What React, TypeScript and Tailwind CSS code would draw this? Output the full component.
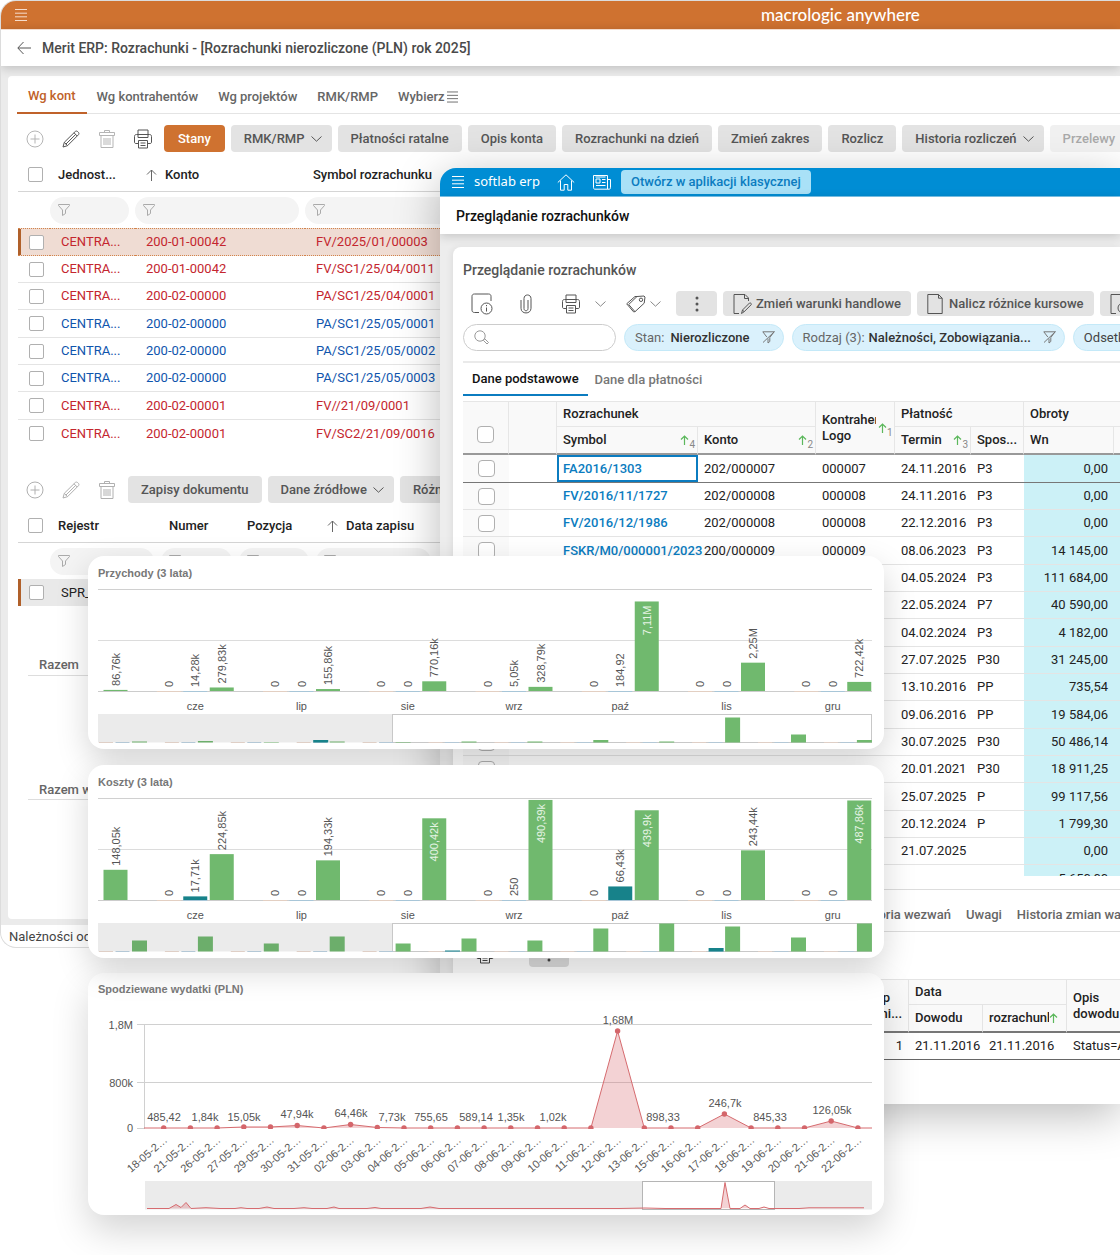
import type { ReactNode } from 'react';

type IconProps = { className?: string };

/* ---------- icons ---------- */

const Svg = ({ w, h, className = '', children }: { w: number; h: number; className?: string; children: ReactNode }) => (
  <svg width={w} height={h} viewBox={`0 0 ${w} ${h}`} fill="none" stroke="currentColor" strokeWidth="1" className={`shrink-0 ${className}`} aria-hidden="true">
    {children}
  </svg>
);

const MenuIcon = ({ className }: IconProps) => (
  <Svg w={12} h={12} className={className}>
    <path d="M0 .5h12M0 4.2h12M0 7.8h12M0 11.5h12" />
  </Svg>
);

const BackIcon = () => (
  <Svg w={14} h={14}>
    <path d="M14 7H1M6.500 1 .8 7l5.700 6" />
  </Svg>
);

const PlusIcon = ({ className }: IconProps) => (
  <Svg w={18} h={18} className={className}>
    <circle cx="9" cy="9" r="8" />
    <path d="M9 4.500v9M4.500 9h9" />
  </Svg>
);

const PencilIcon = ({ className }: IconProps) => (
  <Svg w={18} h={18} className={className}>
    <path d="M1 17l1.300-4.700L13.200 1.600c.7-.7 1.700-.7 2.500 0l.7.7c.7.800.7 1.800 0 2.500L5.500 15.700 1 17zM12 2.800l3.200 3.200M3.800 14.200 13.800 4.300M2.300 12.300l3.200 3.300" />
  </Svg>
);

const TrashIcon = ({ className }: IconProps) => (
  <Svg w={16} h={18} className={className}>
    <path d="M.5 2.500h15v3H.5zM5.500 2.500V.5h5v2M2 5.500v12h12v-12M5 8v7M7 8v7M9 8v7M11 8v7" />
  </Svg>
);

const PrinterIcon = ({ className }: IconProps) => (
  <Svg w={20} h={20} className={className}>
    <path d="M5 5.500V1h10v4.500M5 14.500H3c-1 0-1.500-.5-1.500-1.500V7.500c0-1.300.7-2 2-2h13c1.300 0 2 .7 2 2V13c0 1-.5 1.500-1.500 1.500h-2M5 8.500h10v-3M5 8.500v-3M5.500 11.500h9V19h-9zM7.500 14h5M7.500 16.500h5" />
  </Svg>
);

const ChevronIcon = ({ className }: IconProps) => (
  <Svg w={11} h={6} className={className}>
    <path d="M.5.500 5.500 5.200 10.500.5" />
  </Svg>
);

const UpIcon = ({ className }: IconProps) => (
  <Svg w={11} h={12} className={className}>
    <path d="M5.500 12V1M1 5.500 5.500 1 10 5.500" />
  </Svg>
);

const FunnelIcon = ({ className }: IconProps) => (
  <Svg w={12} h={12} className={className}>
    <path d="M.5.5h11v1L7.500 6v3.500l-3 2V6L.5 1.500z" />
  </Svg>
);

const FunnelOffIcon = () => (
  <Svg w={13} h={13}>
    <path d="M.8.800h11.400L7.800 6.500v4L6 12V7.500M.8.800l4 5.200M12.500.500 1 11.500" />
  </Svg>
);

const HomeIcon = () => (
  <Svg w={18} h={17}>
    <path d="M.8 8.500 9 .8l8.200 7.700M3.500 6.500v9.700h3.700v-5.700h3.600v5.700h3.700V6.500" />
  </Svg>
);

const NewsIcon = () => (
  <Svg w={18} h={15}>
    <path d="M.5.500h14v13.700H2c-1 0-1.500-.7-1.500-1.500zM14.500 4.500h3v8.200c0 1-.5 1.500-1.500 1.500h-1.500M3 4h4v4H3zM9 4.500h3.500M9 7.500h3.500M3 10.500h9.500M2.500 2h10" />
  </Svg>
);

const WindowInfoIcon = () => (
  <Svg w={22} h={22}>
    <path d="M8 19.500H3.500c-1.500 0-2.500-.8-2.500-2.300V3.300C1 1.800 2 1 3.500 1h14C19 1 20 1.800 20 3.300V8" />
    <circle cx="15.500" cy="15.500" r="5.500" />
    <path d="M15.500 14.500v4M15.500 12v1.200" />
  </Svg>
);

const ClipIcon = () => (
  <Svg w={12} h={20}>
    <path d="M8 6v8.500c0 3-4 3-4 0V4.500c0-4.700 7-4.700 7 0v9.800c0 6.200-10 6.200-10 0V6" />
  </Svg>
);

const TagIcon = () => (
  <Svg w={20} h={18}>
    <path d="M11 1.500 18 1l1 1-.8 6.200L9 16.700 2.700 9.500zM11 1.500H9L.7 8.800l6.800 8 1.500-.1" />
    <circle cx="15" cy="4.800" r="1.700" />
  </Svg>
);

const DotsIcon = () => (
  <svg width="4" height="16" viewBox="0 0 4 16" fill="currentColor" aria-hidden="true">
    <circle cx="2" cy="2" r="1.500" />
    <circle cx="2" cy="8" r="1.500" />
    <circle cx="2" cy="14" r="1.500" />
  </svg>
);

const FileEditIcon = () => (
  <Svg w={19} h={20}>
    <path d="M6 19.500H1V.5h11l3.500 3.500v3M11.500.5v4h4M8.500 19.500l1-3.500 7-7c.8-.7 2.400.8 1.700 1.700l-7 7zM9.500 16l2 2" />
  </Svg>
);

const FileIcon = () => (
  <Svg w={16} h={20}>
    <path d="M.8.500h10.700l3.700 3.700v15.300H.8zM11.500.5v3.700h3.700" />
  </Svg>
);

const FileClockIcon = () => (
  <Svg w={19} h={20}>
    <path d="M6 19.500H1V.5h11l3.500 3.500v3M11.500.5v4h4" />
    <circle cx="13" cy="14" r="5" />
    <path d="M13 11v3h3" />
  </Svg>
);

const SearchIcon = () => (
  <Svg w={15} h={15} className="text-[#999]">
    <circle cx="6" cy="6" r="5.200" />
    <path d="M9.800 9.800l1-1 3.700 3.700-1.500 1.500-3.700-3.700z" />
  </Svg>
);

/* ---------- shared bits ---------- */

const Check = ({ label, className = '' }: { label: string; className?: string }) => (
  <input type="checkbox" aria-label={label} className={`block shrink-0 appearance-none border border-[#b0b0b0] bg-white ${className}`} />
);

const SmallCheck = ({ label }: { label: string }) => <Check label={label} className="h-[15px] w-[15px] rounded-[2px]" />;
const BigCheck = ({ label }: { label: string }) => <Check label={label} className="mx-auto h-[17px] w-[17px] rounded-[4px]" />;

const IconButton = ({ label, children, className = '' }: { label: string; children: ReactNode; className?: string }) => (
  <button type="button" aria-label={label} className={`flex shrink-0 items-center justify-center ${className}`}>
    {children}
  </button>
);

const GreyButton = ({ children, className = 'px-[13px]' }: { children: ReactNode; className?: string }) => (
  <button type="button" className={`flex h-[27px] shrink-0 items-center gap-1.5 rounded-[4px] bg-[#e3e3e3] font-medium whitespace-nowrap text-[#555] ${className}`}>
    {children}
  </button>
);

const FilterBox = ({ label }: { label: string }) => (
  <label className="flex h-[27px] items-center rounded-full bg-[#f4f4f4] px-2 text-[#aaa]">
    <FunnelIcon />
    <input type="text" aria-label={`Filtr ${label}`} className="w-0 min-w-0 flex-1 bg-transparent outline-none" />
  </label>
);

/* ---------- back window ---------- */

const accounts = [
  { konto: '200-01-00042', symbol: 'FV/2025/01/00003', tone: 'text-[#c4262e]' },
  { konto: '200-01-00042', symbol: 'FV/SC1/25/04/0011', tone: 'text-[#c4262e]' },
  { konto: '200-02-00000', symbol: 'PA/SC1/25/04/0001', tone: 'text-[#c4262e]' },
  { konto: '200-02-00000', symbol: 'PA/SC1/25/05/0001', tone: 'text-[#0f55ad]' },
  { konto: '200-02-00000', symbol: 'PA/SC1/25/05/0002', tone: 'text-[#0f55ad]' },
  { konto: '200-02-00000', symbol: 'PA/SC1/25/05/0003', tone: 'text-[#0f55ad]' },
  { konto: '200-02-00001', symbol: 'FV//21/09/0001', tone: 'text-[#c4262e]' },
  { konto: '200-02-00001', symbol: 'FV/SC2/21/09/0016', tone: 'text-[#c4262e]' },
];

function AccountsTable() {
  return (
    <table className="mt-1.5 ml-2.5 w-full table-fixed border-separate border-spacing-0 text-left">
      <colgroup>
        <col className="w-8" />
        <col className="w-[85px]" />
        <col className="w-[170px]" />
        <col />
      </colgroup>
      <thead>
        <tr className="h-[34px] text-[#222] [&>th]:border-b [&>th]:border-[#d5d5d5] [&>th]:font-medium">
          <th className="pl-2.5"><SmallCheck label="Zaznacz wszystkie" /></th>
          <th className="pl-2">Jednost...</th>
          <th className="pl-[11px]">
            <span className="flex items-center gap-2"><UpIcon className="text-[#666]" />Konto</span>
          </th>
          <th className="pl-2">Symbol rozrachunku</th>
        </tr>
        <tr className="h-9">
          <td />
          <td className="pr-1.5"><FilterBox label="jednostka" /></td>
          <td className="pr-1.5"><FilterBox label="konto" /></td>
          <td className="pr-1.5"><FilterBox label="symbol" /></td>
        </tr>
      </thead>
      <tbody>
        {accounts.map((a, i) => (
          <tr
            key={a.symbol}
            className={`h-[27px] nth-[3n+1]:h-[28px] [&>td]:pl-[11px] ${a.tone} ${
              i === 0
                ? 'bg-[#efdcd3] [&>td]:border-y [&>td]:border-dotted [&>td]:border-[#d2844c]'
                : i < accounts.length - 1 ? '[&>td]:border-b [&>td]:border-[#e4e4e4]' : ''
            }`}
          >
            <td className={i === 0 ? 'shadow-[inset_3px_0_0_#b0602a]' : ''}>
              <SmallCheck label={a.symbol} />
            </td>
            <td>CENTRA...</td>
            <td>{a.konto}</td>
            <td>{a.symbol}</td>
          </tr>
        ))}
      </tbody>
    </table>
  );
}

function EntriesTable() {
  return (
    <table className="mt-1.5 ml-2.5 w-full table-fixed border-separate border-spacing-0 text-left">
      <colgroup>
        <col className="w-8" />
        <col className="w-[111px]" />
        <col className="w-[78px]" />
        <col className="w-[77px]" />
        <col className="w-[122px]" />
        <col />
      </colgroup>
      <thead>
        <tr className="h-[34px] text-[#222] [&>th]:border-b [&>th]:border-[#d5d5d5] [&>th]:font-medium">
          <th className="pl-2.5"><SmallCheck label="Zaznacz wszystkie zapisy" /></th>
          <th className="pl-2">Rejestr</th>
          <th className="pl-2">Numer</th>
          <th className="pl-2">Pozycja</th>
          <th className="pl-[11px]">
            <span className="flex items-center gap-2"><UpIcon className="text-[#666]" />Data zapisu</span>
          </th>
          <th />
        </tr>
        <tr className="h-9 [&>td]:pr-[7px]">
          <td />
          <td><FilterBox label="rejestr" /></td>
          <td><FilterBox label="numer" /></td>
          <td><FilterBox label="pozycja" /></td>
          <td><FilterBox label="data zapisu" /></td>
          <td />
        </tr>
      </thead>
      <tbody>
        <tr className="h-[27px] bg-[#e9e9e9] text-[#222]">
          <td className="pl-[11px] shadow-[inset_3px_0_0_#b0602a]"><SmallCheck label="SPR" /></td>
          <td className="pl-[11px]">SPR_</td>
          <td colSpan={4} />
        </tr>
      </tbody>
    </table>
  );
}

function MeritWindow() {
  return (
    <section className="col-start-1 row-start-1 self-start overflow-hidden rounded-l-2xl border border-r-0 border-[#dcdcdc] bg-[#ebebeb]">
      <header className="flex h-7 items-center bg-[#cf7230] text-white">
        <button type="button" aria-label="Menu" className="ml-3.5"><MenuIcon className="text-[#f6dccb]" /></button>
        <span className="ml-[734px] font-['Lato'] text-[17px] font-medium whitespace-nowrap">macrologic anywhere</span>
      </header>
      <div className="relative flex h-[37px] items-center gap-[11px] border-t border-[#f3dccd] bg-white pl-4 text-[#555] shadow-[0_2px_10px_rgba(0,0,0,0.2)]">
        <button type="button" aria-label="Wstecz"><BackIcon /></button>
        <h1 className="text-sm font-medium whitespace-nowrap text-[#4a4a4a]">Merit ERP: Rozrachunki - [Rozrachunki nierozliczone (PLN) rok 2025]</h1>
      </div>

      <div className="mt-2.5 ml-[7px] overflow-hidden rounded-l-[4px] bg-white pb-[119px]">
        <nav className="ml-[9px] flex h-[38px] border-b border-[#e4e4e4] font-medium text-[#666]">
          <button type="button" className="-mb-px border-b-2 border-[#c0622a] px-[11px] pt-1 text-[#c0622a]">Wg kont</button>
          <button type="button" className="px-2.5 pt-1">Wg kontrahentów</button>
          <button type="button" className="px-2.5 pt-1">Wg projektów</button>
          <button type="button" className="px-2.5 pt-1">RMK/RMP</button>
          <button type="button" className="flex items-center gap-0.5 px-2.5 pt-1">Wybierz<MenuIcon className="w-[11px]" /></button>
        </nav>

        <div className="mt-[11px] ml-2.5 flex items-center gap-1.5">
          <div className="flex w-[140px] items-center">
            <IconButton label="Dodaj" className="-ml-px w-9"><PlusIcon className="text-[#b5b5b5]" /></IconButton>
            <IconButton label="Edytuj" className="w-9"><PencilIcon className="text-[#555]" /></IconButton>
            <IconButton label="Usuń" className="w-9"><TrashIcon className="text-[#b5b5b5]" /></IconButton>
            <IconButton label="Drukuj" className="w-9"><PrinterIcon className="text-[#555]" /></IconButton>
          </div>
          <button type="button" className="h-[27px] shrink-0 rounded-[4px] bg-[#cf7230] px-3.5 font-medium text-white">Stany</button>
          <GreyButton className="pr-2.5 pl-[13px]">RMK/RMP<ChevronIcon /></GreyButton>
          <GreyButton>Płatności ratalne</GreyButton>
          <GreyButton>Opis konta</GreyButton>
          <GreyButton>Rozrachunki na dzień</GreyButton>
          <GreyButton>Zmień zakres</GreyButton>
          <GreyButton>Rozlicz</GreyButton>
          <GreyButton className="pr-2.5 pl-[13px]">Historia rozliczeń<ChevronIcon /></GreyButton>
          <GreyButton className="px-[13px] opacity-50">Przelewy</GreyButton>
        </div>

        <AccountsTable />

        <div className="mt-[29px] ml-2.5 flex items-center gap-1.5">
          <div className="flex w-[104px] items-center text-[#b0b0b0]">
            <IconButton label="Dodaj zapis" className="-ml-px w-9"><PlusIcon /></IconButton>
            <IconButton label="Edytuj zapis" className="w-9"><PencilIcon /></IconButton>
            <IconButton label="Usuń zapis" className="w-9"><TrashIcon /></IconButton>
          </div>
          <GreyButton>Zapisy dokumentu</GreyButton>
          <GreyButton className="pr-2.5 pl-[13px]">Dane źródłowe<ChevronIcon /></GreyButton>
          <GreyButton>Różnice</GreyButton>
        </div>

        <EntriesTable />

        <div className="mt-[47px] ml-5 h-[23px] border-b border-[#ddd] pl-[11px] leading-6 font-medium text-[#666]">Razem</div>
        <div className="mt-[102px] ml-5 h-[22px] border-b border-[#ddd] pl-[11px] leading-6 font-medium text-[#666]">Razem w</div>
      </div>

      <footer className="mt-1.5 h-[22px] bg-white pl-2 leading-6 text-[#444]">Należności od</footer>
    </section>
  );
}

/* ---------- front window ---------- */

const settlements = [
  { symbol: 'FA2016/1303', konto: '202/000007', logo: '000007', termin: '24.11.2016', sposob: 'P3', wn: '0,00' },
  { symbol: 'FV/2016/11/1727', konto: '202/000008', logo: '000008', termin: '24.11.2016', sposob: 'P3', wn: '0,00' },
  { symbol: 'FV/2016/12/1986', konto: '202/000008', logo: '000008', termin: '22.12.2016', sposob: 'P3', wn: '0,00' },
  { symbol: 'FSKR/M0/000001/2023', konto: '200/000009', logo: '000009', termin: '08.06.2023', sposob: 'P3', wn: '14 145,00' },
  { termin: '04.05.2024', sposob: 'P3', wn: '111 684,00' },
  { termin: '22.05.2024', sposob: 'P7', wn: '40 590,00' },
  { termin: '04.02.2024', sposob: 'P3', wn: '4 182,00' },
  { termin: '27.07.2025', sposob: 'P30', wn: '31 245,00' },
  { termin: '13.10.2016', sposob: 'PP', wn: '735,54' },
  { termin: '09.06.2016', sposob: 'PP', wn: '19 584,06' },
  { termin: '30.07.2025', sposob: 'P30', wn: '50 486,14' },
  { termin: '20.01.2021', sposob: 'P30', wn: '18 911,25' },
  { termin: '25.07.2025', sposob: 'P', wn: '99 117,56' },
  { termin: '20.12.2024', sposob: 'P', wn: '1 799,30' },
  { termin: '21.07.2025', sposob: '', wn: '0,00' },
  { termin: '', sposob: '', wn: '5 650,00' },
];

const SortMark = ({ n }: { n?: string }) => (
  <span className="flex shrink-0 items-center font-normal text-[#888]">
    <Svg w={9} h={10} className="text-[#5cb85c]"><path d="M4.500 10V1M1 4.500 4.500 1 8 4.500" strokeWidth="1.200" /></Svg>
    {n && <span className="pt-2.5 text-[10px] leading-none">{n}</span>}
  </span>
);

function SettlementsTable() {
  return (
    <div className="mt-[5px] ml-2.5 h-[475px] overflow-hidden">
      <table className="w-full table-fixed border-separate border-spacing-0 text-left text-[#222]">
        <colgroup>
          <col className="w-[46px]" />
          <col className="w-12" />
          <col className="w-[141px]" />
          <col className="w-[118px]" />
          <col className="w-[79px]" />
          <col className="w-[76px]" />
          <col className="w-[53px]" />
          <col className="w-[90px]" />
          <col />
        </colgroup>
        <thead className="bg-[#f9f9f9] [&_th]:border-r [&_th]:border-[#e6e6e6] [&_th]:pl-1.5 [&_th]:font-medium [&_th]:whitespace-nowrap [&_th:last-child]:border-r-0">
          <tr className="h-[26px] [&>th]:border-t">
            <th rowSpan={2} className="border-b-2 border-b-[#999]! pt-3.5 pl-0!"><BigCheck label="Zaznacz wszystkie rozrachunki" /></th>
            <th rowSpan={2} className="border-b-2 border-b-[#999]!" />
            <th colSpan={2} className="border-b">Rozrachunek</th>
            <th rowSpan={2} className="border-b-2 border-b-[#999]!">
              <div className="flex items-center gap-0.5">
                <div className="w-[54px] overflow-hidden leading-4">Kontrahent<br />Logo</div>
                <SortMark n="1" />
              </div>
            </th>
            <th colSpan={2} className="border-b">Płatność</th>
            <th colSpan={2} className="border-b">Obroty</th>
          </tr>
          <tr className="h-7 [&>th]:border-b-2 [&>th]:border-b-[#999]">
            <th className="pr-0.5"><div className="flex items-center justify-between">Symbol<SortMark n="4" /></div></th>
            <th className="pr-0.5"><div className="flex items-center justify-between">Konto<SortMark n="2" /></div></th>
            <th className="pr-0.5"><div className="flex items-center justify-between">Termin<SortMark n="3" /></div></th>
            <th>Spos...</th>
            <th>Wn</th>
            <th />
          </tr>
        </thead>
        <tbody>
          {settlements.map((s, i) => (
            <tr
              key={i}
              className={`h-[27px] nth-[3n+1]:h-[28px] [&>td]:border-b [&>td]:pl-1.5 ${i === 0 ? '[&>td]:border-[#777]' : '[&>td]:border-[#e4e4e4]'}`}
            >
              <td className="bg-[#fafafa] pl-0!"><BigCheck label={s.symbol ?? `Rozrachunek ${i + 1}`} /></td>
              <td />
              <td className={`font-medium whitespace-nowrap text-[#0b7cc0] ${i === 0 ? 'shadow-[inset_0_0_0_2px_#0b7cc0]' : ''}`}>
                {s.symbol && <a href="#rozrachunek">{s.symbol}</a>}
              </td>
              <td>{s.konto}</td>
              <td>{s.logo}</td>
              <td>{s.termin}</td>
              <td>{s.sposob}</td>
              <td className="bg-[#ccf1f7] pr-1.5 text-right">{s.wn}</td>
              <td className="bg-[#ccf1f7]" />
            </tr>
          ))}
        </tbody>
      </table>
    </div>
  );
}

function DocumentsTable() {
  return (
    <table className="mt-3 ml-2.5 w-full table-fixed border-separate border-spacing-0 text-left text-[#222]">
      <colgroup>
        <col className="w-[400px]" />
        <col className="w-[46px]" />
        <col className="w-[74px]" />
        <col className="w-[84px]" />
        <col />
      </colgroup>
      <thead className="bg-[#f9f9f9] [&_th]:border-r [&_th]:border-[#e4e4e4] [&_th]:pl-1.5 [&_th]:font-medium">
        <tr className="h-[26px] [&>th]:border-t">
          <th rowSpan={2} className="border-b-2 border-b-[#777]!" />
          <th rowSpan={2} className="border-b-2 border-b-[#777]! pr-1.5 text-right leading-4"><span className="pr-3">Lp</span><br />ni...</th>
          <th colSpan={2} className="border-b">Data</th>
          <th rowSpan={2} className="border-b-2 border-b-[#777]! leading-4">Opis<br />dowodu</th>
        </tr>
        <tr className="h-7 [&>th]:border-b-2 [&>th]:border-b-[#777]">
          <th>Dowodu</th>
          <th>
            <div className="flex items-center">
              <span className="w-[60px] overflow-hidden">rozrachunku</span>
              <SortMark />
            </div>
          </th>
        </tr>
      </thead>
      <tbody>
        <tr className="h-[27px] [&>td]:border-b [&>td]:border-[#666] [&>td]:pl-1.5">
          <td />
          <td className="pr-1.5 text-right">1</td>
          <td>21.11.2016</td>
          <td>21.11.2016</td>
          <td className="whitespace-nowrap">Status=A</td>
        </tr>
      </tbody>
    </table>
  );
}

function SoftlabWindow() {
  return (
    <section className="col-start-1 row-start-1 mt-[168px] ml-[440px] self-start overflow-hidden rounded-tl-2xl bg-[#ededed] shadow-[0_10px_45px_rgba(0,0,0,0.28)]">
      <header className="flex h-[29px] items-center border-b border-[#7cc6ec] bg-[#008dd4] text-white">
        <button type="button" aria-label="Menu" className="ml-3"><MenuIcon /></button>
        <span className="ml-2.5 w-[83px] font-['Noto_Sans'] text-[13px] whitespace-nowrap">softlab erp</span>
        <IconButton label="Start" className="w-[18px]"><HomeIcon /></IconButton>
        <IconButton label="Aktualności" className="ml-[18px] w-[18px]"><NewsIcon /></IconButton>
        <button type="button" className="ml-2.5 h-6 rounded-[4px] bg-[#a9e1f7] px-2.5 font-medium whitespace-nowrap text-[#0b7cc0]">Otwórz w aplikacji klasycznej</button>
      </header>
      <div className="relative flex h-[37px] items-center bg-white pl-4 shadow-[0_2px_10px_rgba(0,0,0,0.18)]">
        <h2 className="text-sm font-medium text-[#111]">Przeglądanie rozrachunków</h2>
      </div>

      <div className="mt-[13px] ml-[13px] rounded-tl-lg bg-white pb-11 shadow-[-2px_0_6px_rgba(0,0,0,0.06)]">
        <h3 className="flex h-11 items-center pt-0.5 pl-2.5 text-sm font-medium text-[#555]">Przeglądanie rozrachunków</h3>
        <div className="flex h-[25px] items-center overflow-hidden pl-[18px] text-[#555]">
          <IconButton label="Informacje"><WindowInfoIcon /></IconButton>
          <IconButton label="Załączniki" className="ml-[27px]"><ClipIcon /></IconButton>
          <IconButton label="Drukuj" className="ml-[29px]"><PrinterIcon /></IconButton>
          <IconButton label="Opcje wydruku" className="ml-3.5"><ChevronIcon className="text-[#888]" /></IconButton>
          <IconButton label="Etykiety" className="ml-5"><TagIcon /></IconButton>
          <IconButton label="Opcje etykiet" className="ml-1"><ChevronIcon className="text-[#888]" /></IconButton>
          <IconButton label="Więcej" className="ml-[15px] h-[25px] w-[41px] rounded-[4px] bg-[#e3e3e3]"><DotsIcon /></IconButton>
          <button type="button" className="ml-1.5 flex h-[25px] shrink-0 items-center gap-1 rounded-[4px] bg-[#e3e3e3] px-2.5 font-medium whitespace-nowrap"><FileEditIcon />Zmień warunki handlowe</button>
          <button type="button" className="ml-1.5 flex h-[25px] shrink-0 items-center gap-1.5 rounded-[4px] bg-[#e3e3e3] px-2.5 font-medium whitespace-nowrap"><FileIcon />Nalicz różnice kursowe</button>
          <button type="button" aria-label="Odsetki" className="ml-1.5 flex h-[25px] w-20 shrink-0 items-center rounded-[4px] bg-[#e3e3e3] pl-2.5"><FileClockIcon /></button>
        </div>

        <div className="mt-2 ml-2.5 flex gap-2 overflow-hidden whitespace-nowrap">
          <label className="flex h-[27px] w-[153px] shrink-0 items-center rounded-full border border-[#ccc] px-2.5">
            <SearchIcon />
            <input type="search" aria-label="Szukaj" className="w-0 min-w-0 flex-1 bg-transparent outline-none" />
          </label>
          <div className="flex h-[27px] shrink-0 items-center rounded-full border border-[#c4e9f8] bg-[#daf1fc] pr-2 pl-2.5 text-[#333]">
            <span className="text-[#666]">Stan:</span>
            <span className="ml-1.5 font-medium">Nierozliczone</span>
            <IconButton label="Usuń filtr stanu" className="ml-3 text-[#777]"><FunnelOffIcon /></IconButton>
          </div>
          <div className="flex h-[27px] shrink-0 items-center rounded-full border border-[#c4e9f8] bg-[#daf1fc] pr-2 pl-2.5 text-[#333]">
            <span className="text-[#666]">Rodzaj (3):</span>
            <span className="ml-1 font-medium">Należności, Zobowiązania...</span>
            <IconButton label="Usuń filtr rodzaju" className="ml-3 text-[#777]"><FunnelOffIcon /></IconButton>
          </div>
          <div className="flex h-[27px] shrink-0 items-center rounded-full border border-[#c4e9f8] bg-[#daf1fc] px-2.5 text-[#444]">Odsetki</div>
        </div>

        <nav className="mt-2.5 ml-2.5 flex h-[35px] gap-[7px] border-t-2 border-[#eaeaea] font-medium text-[#777]">
          <button type="button" className="border-b-2 border-[#0b7cc0] px-[9px] text-[#111]">Dane podstawowe</button>
          <button type="button">Dane dla płatności</button>
        </nav>

        <SettlementsTable />

        <nav className="mt-[13px] ml-2.5 flex h-[43px] justify-start gap-[15px] border-y border-[#ddd] pt-2 pl-[392px] font-medium whitespace-nowrap text-[#666]">
          <button type="button">Historia wezwań</button>
          <button type="button">Uwagi</button>
          <button type="button">Historia zmian warunków</button>
        </nav>
        <div className="mt-2 ml-[22px] flex items-center gap-[34px] text-[#444]">
          <IconButton label="Drukuj dowód"><PrinterIcon /></IconButton>
          <IconButton label="Więcej opcji" className="h-[27px] w-10 rounded-[4px] bg-[#ddd]"><DotsIcon /></IconButton>
        </div>
        <DocumentsTable />
      </div>
    </section>
  );
}

/* ---------- chart cards ---------- */

type Bar = { label: string; value: number };
type Month = { name: string; teal?: Bar; green: Bar };

const incomeMonths: Month[] = [
  { name: '', green: { label: '86,76k', value: 86.76 } },
  { name: 'cze', teal: { label: '14,28k', value: 0 }, green: { label: '279,83k', value: 279.83 } },
  { name: 'lip', teal: { label: '0', value: 0 }, green: { label: '155,86k', value: 155.86 } },
  { name: 'sie', teal: { label: '0', value: 0 }, green: { label: '770,16k', value: 770.16 } },
  { name: 'wrz', teal: { label: '5,05k', value: 0 }, green: { label: '328,79k', value: 328.79 } },
  { name: 'paź', teal: { label: '184,92', value: 0 }, green: { label: '7,11M', value: 7110 } },
  { name: 'lis', teal: { label: '0', value: 0 }, green: { label: '2,25M', value: 2250 } },
  { name: 'gru', teal: { label: '0', value: 0 }, green: { label: '722,42k', value: 722.42 } },
];

const costMonths: Month[] = [
  { name: '', green: { label: '148,05k', value: 148.05 } },
  { name: 'cze', teal: { label: '17,71k', value: 17.71 }, green: { label: '224,85k', value: 224.85 } },
  { name: 'lip', teal: { label: '0', value: 0 }, green: { label: '194,33k', value: 194.33 } },
  { name: 'sie', teal: { label: '0', value: 0 }, green: { label: '400,42k', value: 400.42 } },
  { name: 'wrz', teal: { label: '250', value: 0 }, green: { label: '490,39k', value: 490.39 } },
  { name: 'paź', teal: { label: '66,43k', value: 66.43 }, green: { label: '439,9k', value: 439.9 } },
  { name: 'lis', teal: { label: '0', value: 0 }, green: { label: '243,44k', value: 243.44 } },
  { name: 'gru', teal: { label: '0', value: 0 }, green: { label: '487,86k', value: 487.86 } },
];

function BarLabel({ x, top, bar }: { x: number; top: number; bar: Bar }) {
  // tall bars carry their label inside, in white
  const inside = 107 - top > 75;
  return (
    <text transform={`translate(${x + 4} ${inside ? top + 4 : top - 4}) rotate(-90)`} textAnchor={inside ? 'end' : 'start'} fontSize="11" fill={inside ? '#e6f4e5' : '#555'}>
      {bar.label}
    </text>
  );
}

function BarChart({ title, months, max, overview, tealOverview }: {
  title: string;
  months: Month[];
  max: number;
  overview: number[];
  tealOverview: Record<number, number>;
}) {
  const base = 107;
  const height = (v: number) => (v / max) * 102;
  return (
    <article className="h-[193px] rounded-2xl bg-white pt-[9px] pr-3 pl-2.5 shadow-[0_12px_32px_rgba(0,0,0,0.17)]">
      <h4 className="h-[19px] text-[11px] leading-4 font-bold text-[#777]">{title}</h4>
      <svg viewBox="0 0 774 160" className="block w-full" role="img" aria-label={title}>
        <path d="M0 5.500h774" stroke="#d0d0d0" />
        <path d="M0 56.500h774" stroke="#dcdcdc" />
        <path d="M0 107.500h774" stroke="#ccc" />
        {months.map((m, i) => {
          const gx = 17.500 + i * 106.250;
          const top = base - height(m.green.value);
          return (
            <g key={i}>
              <rect x={gx - 12} y={top} width="24" height={base - top} fill="#70b96e" />
              <BarLabel x={gx} top={top} bar={m.green} />
              {m.teal && (
                <>
                  <path d={`M${gx - 65} 107.500h24`} stroke="#e3cfc2" />
                  <path d={`M${gx - 38.500} 107.500h24`} stroke="#a8c6d8" />
                  <rect x={gx - 38.500} y={base - height(m.teal.value)} width="24" height={height(m.teal.value)} fill="#17828a" />
                  <BarLabel x={gx - 53} top={base} bar={{ label: '0', value: 0 }} />
                  <BarLabel x={gx - 26.500} top={base - height(m.teal.value)} bar={m.teal} />
                  <text x={gx - 26.500} y="126" textAnchor="middle" fontSize="11" fill="#555">{m.name}</text>
                </>
              )}
            </g>
          );
        })}
        <rect x="0" y="130" width="295" height="28.500" fill="#ebebeb" />
        <rect x="294.500" y="130.500" width="479" height="28" fill="#fff" stroke="#c8c8c8" />
        {overview.map((h, i) => (
          <g key={i}>
            <path d={`M${i * 65.900 + 1} 158.500h14`} stroke="#dfcfc6" />
            <path d={`M${i * 65.900 + 17.500} 158.500h14`} stroke="#b4c8d6" />
            <rect x={i * 65.900 + 34} y={158.500 - h} width="15" height={h} fill={i < 4 ? '#6cae6b' : '#70b96e'} />
            {tealOverview[i] && <rect x={i * 65.900 + 17.500} y={158.500 - tealOverview[i]} width="15" height={tealOverview[i]} fill="#17828a" />}
          </g>
        ))}
      </svg>
    </article>
  );
}

const days = [
  '18-05', '21-05', '26-05', '27-05', '29-05', '30-05', '31-05', '02-06', '03-06', '04-06', '05-06', '06-06', '07-06', '08-06',
  '09-06', '10-06', '11-06', '12-06', '13-06', '15-06', '16-06', '17-06', '18-06', '19-06', '20-06', '21-06', '22-06',
];

// heights above the zero line, by day index; the rest lie on it
const peaks: Record<number, number> = { 3: 1, 4: 1, 5: 2.5, 7: 3.5, 8: 0.5, 17: 97, 21: 14, 25: 7 };

const spendLabels: [string, number, number][] = [
  ['485,42', 66, 121], ['1,84k', 107, 121], ['15,05k', 146, 121], ['47,94k', 199, 118], ['64,46k', 253, 117],
  ['7,73k', 294, 121], ['755,65', 333, 121], ['589,14', 378, 121], ['1,35k', 413, 121], ['1,02k', 455, 121],
  ['1,68M', 520, 24], ['898,33', 565, 121], ['246,7k', 627, 107], ['845,33', 672, 121], ['126,05k', 734, 114],
];

function SpendingChart() {
  const points = days.map((_, i) => [65.700 + i * 26.700, 128 - (peaks[i] ?? 0)]);
  const line = points.map(([x, y]) => `${x} ${y}`).join('L');
  return (
    <article className="h-[242px] rounded-2xl bg-white pt-2 pr-3 pl-2.5 shadow-[0_16px_36px_rgba(0,0,0,0.17)]">
      <h4 className="h-[19px] text-[11px] leading-4 font-bold text-[#777]">Spodziewane wydatki (PLN)</h4>
      <svg viewBox="0 0 774 212" className="block w-full" role="img" aria-label="Spodziewane wydatki (PLN)">
        <defs>
          <clipPath id="plot"><rect x="46" y="0" width="728" height="129" /></clipPath>
        </defs>
        <path d="M39 24.500h735M39 82.500h735M39 128.500h8M46.500 24v105" stroke="#d0d0d0" />
        <g fontSize="11" fill="#555" textAnchor="end">
          <text x="35" y="29">1,8M</text>
          <text x="35" y="87">800k</text>
          <text x="35" y="132">0</text>
        </g>
        <g clipPath="url(#plot)">
          <path d={`M46 128L${line}L774 128`} fill="#d66b6f" fillOpacity="0.3" stroke="#d66b6f" />
          {points.map(([x, y], i) => <circle key={i} cx={x} cy={y} r="2.700" fill="#d4666b" />)}
        </g>
        <g fontSize="11" fill="#555" textAnchor="middle">
          {spendLabels.map(([t, x, y]) => <text key={t} x={x} y={y}>{t}</text>)}
        </g>
        <g fontSize="11" fill="#555" textAnchor="end">
          {days.map((d, i) => (
            <text key={d} transform={`translate(${70 + i * 26.700} 141) rotate(-41)`}>{d}-2…</text>
          ))}
        </g>
        <rect x="47" y="181" width="727" height="28.500" fill="#ebebeb" />
        <rect x="544.500" y="181.500" width="132" height="28" fill="#fff" stroke="#b5b5b5" />
        <path
          d="M49 208.500h22l7-4 5 3 5-5 5 6 15-.8 14 .8h15l6-.8 6 .8h12l8-1.500 7 1.500h20l10-.8 8 .8h15l7-1.500 5 1.500h28l8-1 6 1h40l9-1.500 9 1.500h180l26-.5 20 .5h56l4-26 5 26h10l5-3.500 5 3.500h9l5-1.500 5 1.500h30l10-.7h55"
          fill="#d66b6f"
          fillOpacity="0.3"
          stroke="#d66b6f"
        />
      </svg>
    </article>
  );
}

export default function App() {
  return (
    <main className="grid grid-cols-[minmax(0,1fr)] overflow-hidden bg-white font-['Roboto',sans-serif] text-[13px]">
      <MeritWindow />
      <SoftlabWindow />
      <div className="z-10 col-start-1 row-start-1 mt-[556px] ml-[88px] max-w-[796px] self-start pb-10 font-['Liberation_Sans',sans-serif]">
        <div className="flex flex-col gap-4 pb-[15px]">
          <BarChart
            title="Przychody (3 lata)"
            months={incomeMonths}
            max={8100}
            overview={[1, 1.5, 0.5, 1, 0.5, 1, 1, 2.5, 1, 25, 8, 2.5]}
            tealOverview={{ 3: 2.5 }}
          />
          <BarChart
            title="Koszty (3 lata)"
            months={costMonths}
            max={500}
            overview={[11, 15, 8, 15, 8, 13, 11, 23, 28, 25, 14, 28]}
            tealOverview={{ 5: 1, 9: 3.5 }}
          />
        </div>
        <SpendingChart />
      </div>
    </main>
  );
}
